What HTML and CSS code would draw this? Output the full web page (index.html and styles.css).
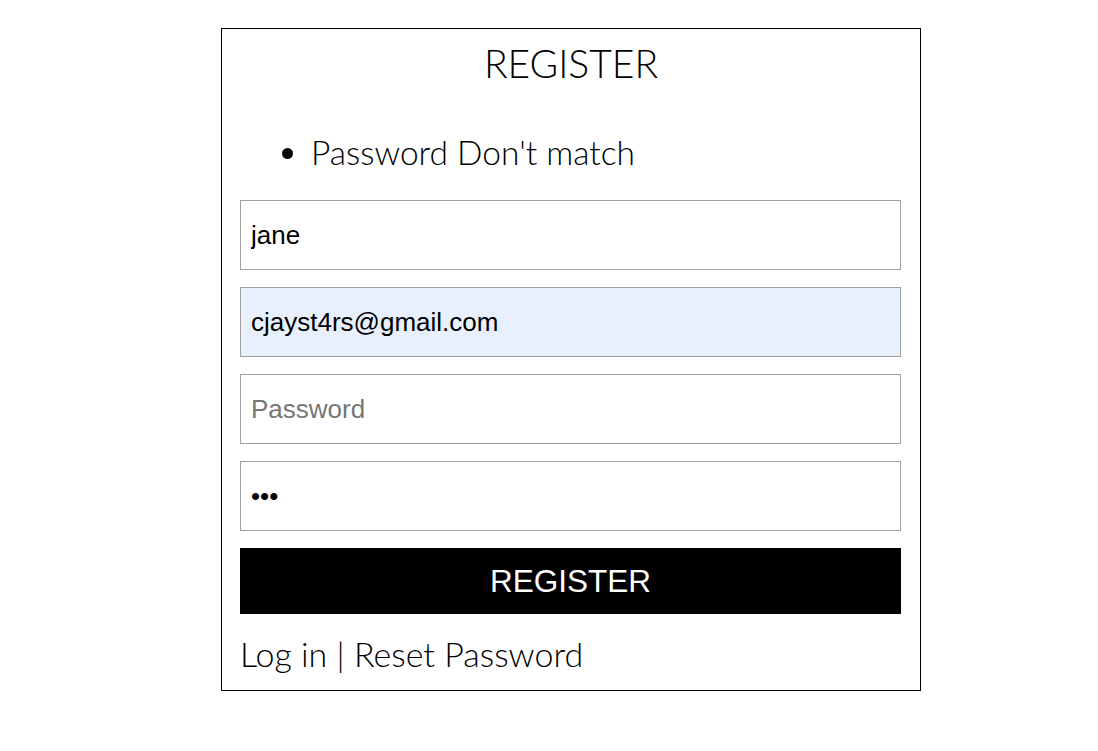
FILE: index.html
```html
<!DOCTYPE html>
<html>
<head>
<meta charset="utf-8">
<link rel="stylesheet" href="styles.css">
</head>
<body>
<div class="page">
  <div class="card">
    <h2 class="title">REGISTER</h2>
    <ul class="errors">
      <li>Password Don't match</li>
    </ul>
    <form class="form">
      <input class="field" type="text" value="jane">
      <input class="field autofill" type="email" value="cjayst4rs@gmail.com">
      <input class="field" type="password" placeholder="Password">
      <input class="field" type="password" value="abc">
      <button class="submit" type="button">REGISTER</button>
    </form>
    <div class="links"><a class="link" href="#">Log in</a> | <a class="link" href="#">Reset Password</a></div>
  </div>
</div>
</body>
</html>
```
FILE: styles.css
```css
html, body {
  margin: 0;
  padding: 0;
  background: #fff;
}
.page {
  padding: 28px 0 0 221px;
}
.card {
  width: 698px;
  border: 1px solid #000;
  font-family: Lato, "Open Sans", sans-serif;
  font-weight: 300;
  color: #000;
  display: flex;
  flex-direction: column;
}
.title {
  margin: 11px 0 0;
  font-size: 39px;
  font-weight: 300;
  line-height: 46px;
  text-align: center;
}
.errors {
  margin: 46px 0 0;
  padding: 0 0 0 89px;
  font-size: 33.5px;
  line-height: 40px;
}
.form {
  display: flex;
  flex-direction: column;
  gap: 17px;
  margin: 28px 19px 0 18px;
}
.field {
  box-sizing: border-box;
  width: 100%;
  height: 70px;
  margin: 0;
  border: 1px solid #a0a0a0;
  padding: 0 10px;
  font-family: "Liberation Sans", Arial, sans-serif;
  font-size: 26px;
  color: #000;
  background: #fff;
  outline: none;
}
.field::placeholder {
  color: #767676;
}
.autofill {
  background: #e8f0fe;
}
.submit {
  height: 66px;
  margin: 0;
  border: none;
  background: #000;
  color: #fff;
  font-family: "Liberation Sans", Arial, sans-serif;
  font-size: 31.5px;
  padding: 0;
}
.links {
  margin: 18px 0 14px 18px;
  font-size: 34px;
  line-height: 44px;
}
.link {
  color: #000;
  text-decoration: none;
}
```
